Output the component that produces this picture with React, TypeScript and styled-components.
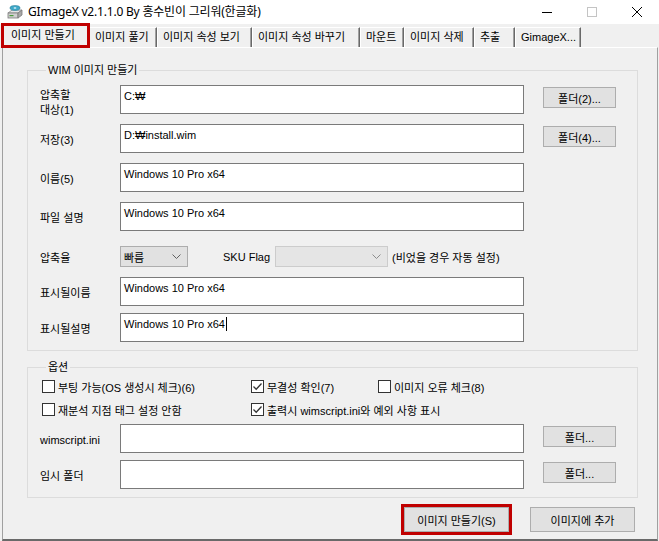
import React from "react";
import styled, { createGlobalStyle } from "styled-components";

const GlobalStyle = createGlobalStyle`
  html, body {
    margin: 0;
    padding: 0;
    background: #f0f0f0;
  }
  body {
    font-family: "Liberation Sans", "Noto Sans CJK KR", sans-serif;
    font-size: 11px;
    color: #000;
  }
`;

const tabs = [
  { label: "이미지 만들기", width: 87 },
  { label: "이미지 풀기", width: 68 },
  { label: "이미지 속성 보기", width: 95 },
  { label: "이미지 속성 바꾸기", width: 108 },
  { label: "마운트", width: 44 },
  { label: "이미지 삭제", width: 70 },
  { label: "추출", width: 41 },
  { label: "GimageX...", width: 66 },
];

const AppIcon = () => (
  <svg width="16" height="16" viewBox="0 0 16 16">
    <path d="M1 9 L5 6 L15 6 L11 9 Z" fill="#e6e6e6" stroke="#8a8a8a" strokeWidth="0.8" />
    <rect x="1" y="9" width="10" height="5" fill="#cfcfcf" stroke="#7a7a7a" strokeWidth="0.8" />
    <path d="M11 9 L15 6 L15 11 L11 14 Z" fill="#a8a8a8" stroke="#7a7a7a" strokeWidth="0.8" />
    <ellipse cx="8" cy="4" rx="5" ry="2.4" fill="#3fa9c9" stroke="#2a7d99" strokeWidth="0.6" />
    <ellipse cx="8" cy="4" rx="1.4" ry="0.7" fill="#e8f6fb" />
    <rect x="2.5" y="11" width="4" height="1.2" fill="#4a9a3a" />
  </svg>
);

const Chevron = ({ color }: { color: string }) => (
  <svg width="9" height="5" viewBox="0 0 9 5">
    <polyline points="0.5,0.5 4.5,4.5 8.5,0.5" fill="none" stroke={color} strokeWidth="1" />
  </svg>
);

const Check = () => (
  <svg width="11" height="11" viewBox="0 0 11 11">
    <polyline points="1.5,5.5 4.2,8.3 9.5,2.5" fill="none" stroke="#333" strokeWidth="1.3" />
  </svg>
);

const App = () => {
  return (
    <>
      <GlobalStyle />
      <Window>
        <TitleBar>
          <IconSlot>
            <AppIcon />
          </IconSlot>
          <Title>GImageX v2.1.1.0 By 홍수빈이 그리워(한글화)</Title>
          <Controls>
            <Control>
              <svg width="10" height="10" viewBox="0 0 10 10">
                <line x1="0" y1="5.5" x2="10" y2="5.5" stroke="#000" strokeWidth="1" />
              </svg>
            </Control>
            <Control>
              <svg width="10" height="10" viewBox="0 0 10 10">
                <rect x="0.5" y="0.5" width="9" height="9" fill="none" stroke="#c4c4c4" strokeWidth="1" />
              </svg>
            </Control>
            <Control>
              <svg width="10" height="10" viewBox="0 0 10 10">
                <path d="M0 0 L10 10 M10 0 L0 10" stroke="#000" strokeWidth="1" />
              </svg>
            </Control>
          </Controls>
        </TitleBar>

        <TabStrip>
          {tabs.map((t, i) => (
            <Tab key={t.label} $active={i === 0} style={{ width: t.width }}>
              {t.label}
            </Tab>
          ))}
        </TabStrip>

        <Panel>
          <Group>
            <Legend>WIM 이미지 만들기</Legend>
            <FieldList $mt={8}>
              <FieldRow>
                <Label $drop={7}>
                  <span>
                    압축할
                    <br />
                    대상(1)
                  </span>
                </Label>
                <TextBox>C:₩</TextBox>
                <Button>폴더(2)...</Button>
              </FieldRow>
              <FieldRow>
                <Label>저장(3)</Label>
                <TextBox>D:₩install.wim</TextBox>
                <Button>폴더(4)...</Button>
              </FieldRow>
              <FieldRow>
                <Label>이름(5)</Label>
                <TextBox>Windows 10 Pro x64</TextBox>
              </FieldRow>
              <FieldRow>
                <Label>파일 설명</Label>
                <TextBox>Windows 10 Pro x64</TextBox>
              </FieldRow>
              <FieldRow $mt={5}>
                <Label>압축율</Label>
                <ComboLine>
                  <Combo $w={68}>
                    <span>빠름</span>
                    <Chevron color="#606060" />
                  </Combo>
                  <SkuLabel>SKU Flag</SkuLabel>
                  <Combo $w={113} $disabled>
                    <span />
                    <Chevron color="#8c8c8c" />
                  </Combo>
                  <Hint>(비었을 경우 자동 설정)</Hint>
                </ComboLine>
              </FieldRow>
              <FieldRow>
                <Label>표시될이름</Label>
                <TextBox>Windows 10 Pro x64</TextBox>
              </FieldRow>
              <FieldRow $mt={-3}>
                <Label>표시될설명</Label>
                <TextBox>
                  Windows 10 Pro x64
                  <Caret />
                </TextBox>
              </FieldRow>
            </FieldList>
          </Group>

          <Group $mt={9} $pb={8}>
            <Legend>옵션</Legend>
            <CheckGrid>
              <CheckItem>
                <Box />
                부팅 가능(OS 생성시 체크)(6)
              </CheckItem>
              <CheckItem>
                <Box>
                  <Check />
                </Box>
                무결성 확인(7)
              </CheckItem>
              <CheckItem>
                <Box />
                이미지 오류 체크(8)
              </CheckItem>
              <CheckItem>
                <Box />
                재분석 지점 태그 설정 안함
              </CheckItem>
              <CheckItem $span>
                <Box>
                  <Check />
                </Box>
                출력시 wimscript.ini와 예외 사항 표시
              </CheckItem>
            </CheckGrid>
            <FieldList $gap={7} $mt={6}>
              <FieldRow>
                <Label>wimscript.ini</Label>
                <TextBox />
                <Button>폴더...</Button>
              </FieldRow>
              <FieldRow>
                <Label>임시 폴더</Label>
                <TextBox />
                <Button>폴더...</Button>
              </FieldRow>
            </FieldList>
          </Group>

          <Footer>
            <Button $wide $marked>
              이미지 만들기(S)
            </Button>
            <Button $wide>이미지에 추가</Button>
          </Footer>
        </Panel>
      </Window>
    </>
  );
};

export default App;

const Window = styled.div`
  width: 659px;
  height: 541px;
  display: flex;
  flex-direction: column;
  background: #f0f0f0;
  overflow: hidden;
`;

const TitleBar = styled.div`
  height: 24px;
  display: flex;
  align-items: center;
  background: #fff;
  flex-shrink: 0;
`;

const IconSlot = styled.div`
  width: 16px;
  height: 16px;
  margin-left: 7px;
  display: flex;
`;

const Title = styled.div`
  margin-left: 5px;
  font-family: "Noto Sans", "Noto Sans CJK KR", sans-serif;
  font-size: 12px;
  letter-spacing: -0.2px;
  line-height: 16px;
  color: #000;
  flex: 1;
  white-space: nowrap;
`;

const Controls = styled.div`
  display: flex;
  height: 100%;
`;

const Control = styled.div`
  width: 45px;
  height: 100%;
  display: flex;
  align-items: center;
  justify-content: center;
`;

const TabStrip = styled.div`
  height: 23px;
  display: flex;
  align-items: flex-end;
  padding-left: 2px;
  flex-shrink: 0;
`;

const Tab = styled.div<{ $active?: boolean }>`
  box-sizing: border-box;
  height: ${({ $active }) => ($active ? "23px" : "20px")};
  padding-left: ${({ $active }) => ($active ? "8px" : "5px")};
  padding-top: ${({ $active }) => ($active ? "3px" : "2px")};
  border-top: 1px solid #fff;
  border-left: 1px solid #fff;
  border-right: 1px solid #696969;
  box-shadow: inset -1px 0 0 #a0a0a0;
  line-height: 15px;
  white-space: nowrap;
  background: #f0f0f0;
  position: relative;
  z-index: ${({ $active }) => ($active ? 1 : 0)};
  outline: ${({ $active }) => ($active ? "3px solid #c00000" : "none")};
  outline-offset: -2px;
`;

const Panel = styled.div`
  flex: 1;
  margin: 0 1px 0 2px;
  border-top: 1px solid #fff;
  border-left: 1px solid #a0a0a0;
  border-right: 1px solid #a0a0a0;
  border-bottom: 2px solid #696969;
  padding: 15px 19px 0 24px;
  display: flex;
  flex-direction: column;
`;

const Group = styled.fieldset<{ $mt?: number; $pb?: number }>`
  margin: ${({ $mt }) => $mt ?? 0}px 0 0 0;
  padding: 0 19px ${({ $pb }) => $pb ?? 8}px 12px;
  border: 1px solid #dcdcdc;
  min-width: 0;
`;

const Legend = styled.legend`
  margin-left: 6px;
  padding: 0 2px;
  line-height: 14px;
  color: #000;
`;

const FieldList = styled.div<{ $gap?: number; $mt?: number }>`
  display: flex;
  flex-direction: column;
  gap: ${({ $gap }) => $gap ?? 10}px;
  margin-top: ${({ $mt }) => $mt ?? 7}px;
`;

const FieldRow = styled.div<{ $mt?: number }>`
  display: grid;
  grid-template-columns: 80px 404px 92px;
  align-items: center;
  margin-top: ${({ $mt }) => $mt ?? 0}px;
`;

/* zero-height box: the text hangs around the row's centre and never sets the row height */
const Label = styled.div<{ $drop?: number }>`
  height: 0;
  padding-top: ${({ $drop }) => $drop ?? 4}px;
  display: flex;
  align-items: center;
  line-height: 15px;
  white-space: nowrap;
`;

const TextBox = styled.div`
  box-sizing: border-box;
  height: 29px;
  background: #fff;
  border: 1px solid #7a7a7a;
  padding: 3px 3px 0;
  line-height: 15px;
  white-space: nowrap;
  display: flex;
  align-items: flex-start;
`;

const Caret = styled.span`
  display: inline-block;
  width: 1px;
  height: 14px;
  background: #000;
  margin-left: 1px;
`;

const Button = styled.div<{ $wide?: boolean; $marked?: boolean }>`
  box-sizing: border-box;
  width: ${({ $wide }) => ($wide ? "105px" : "73px")};
  height: ${({ $wide }) => ($wide ? "25px" : "21px")};
  align-self: start;
  justify-self: end;
  margin-top: ${({ $wide }) => ($wide ? "0" : "2px")};
  background: #e1e1e1;
  border: 1px solid #adadad;
  display: flex;
  align-items: center;
  justify-content: center;
  white-space: nowrap;
  outline: ${({ $marked }) => ($marked ? "3px solid #c00000" : "none")};
  outline-offset: 0;
`;

const ComboLine = styled.div`
  display: flex;
  align-items: center;
  white-space: nowrap;
`;

const Combo = styled.div<{ $w: number; $disabled?: boolean }>`
  box-sizing: border-box;
  width: ${({ $w }) => $w}px;
  height: 21px;
  background: ${({ $disabled }) => ($disabled ? "#e5e5e5" : "#e1e1e1")};
  border: 1px solid ${({ $disabled }) => ($disabled ? "#cccccc" : "#adadad")};
  display: flex;
  align-items: center;
  justify-content: space-between;
  padding: 0 6px 0 3px;
`;

const SkuLabel = styled.span`
  margin-left: 35px;
  width: 52px;
`;

const Hint = styled.span`
  margin-left: 4px;
`;

const CheckGrid = styled.div`
  display: grid;
  grid-template-columns: 209px 127px auto;
  row-gap: 6px;
  padding-left: 2px;
  margin-top: 4px;
`;

const CheckItem = styled.div<{ $span?: boolean }>`
  display: flex;
  align-items: center;
  gap: 3px;
  height: 17px;
  white-space: nowrap;
  grid-column: ${({ $span }) => ($span ? "span 2" : "auto")};
`;

const Box = styled.span`
  box-sizing: border-box;
  width: 13px;
  height: 13px;
  border: 1px solid #333;
  background: #fff;
  display: flex;
  align-items: center;
  justify-content: center;
  flex-shrink: 0;
`;

const Footer = styled.div`
  display: flex;
  justify-content: flex-end;
  gap: 21px;
  margin-top: 9px;
  padding-right: 3px;
`;
